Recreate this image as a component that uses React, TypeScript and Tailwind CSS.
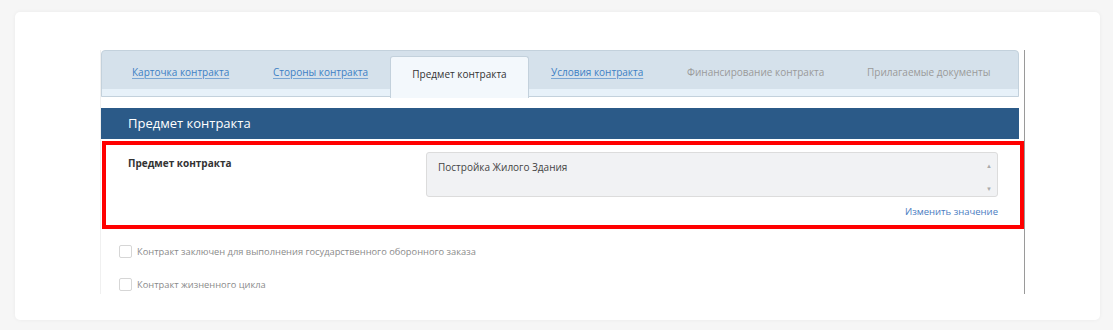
import React from 'react';

// Contract subject screen, shown as a framed screenshot on a card

type Tab = { label: string; width: string; pad: string; kind: 'link' | 'active' | 'muted' };

const tabs: Tab[] = [
  { label: 'Карточка контракта', width: 'w-[150px]', pad: 'pl-[30px]', kind: 'link' },
  { label: 'Стороны контракта', width: 'w-[138px]', pad: 'pl-[21px]', kind: 'link' },
  { label: 'Предмет контракта', width: 'w-[139px]', pad: 'justify-center', kind: 'active' },
  { label: 'Условия контракта', width: 'w-[138px]', pad: 'pl-[22px]', kind: 'link' },
  { label: 'Финансирование контракта', width: 'w-[180px]', pad: 'pl-[20px]', kind: 'muted' },
  { label: 'Прилагаемые документы', width: 'w-[170px]', pad: 'pl-[20px]', kind: 'muted' },
];

function TabItem({ tab }: { tab: Tab }) {
  if (tab.kind === 'active') {
    return (
      <div
        className={`${tab.width} ${tab.pad} mt-[5px] h-[42px] bg-[#f3f8fc] border border-b-0 border-[#c3d1dc] rounded-t-[3px] flex items-center pb-[7px] text-[#333] relative z-10`}
      >
        {tab.label}
      </div>
    );
  }
  return (
    <div className={`${tab.width} ${tab.pad} h-[38px] pt-[4px] flex items-center`}>
      {tab.kind === 'link' ? (
        <span className="text-[#3d7fc4] underline underline-offset-2 decoration-[#7aa6d4]">{tab.label}</span>
      ) : (
        <span className="text-[#9a9a9a]">{tab.label}</span>
      )}
    </div>
  );
}

function Checkbox({ label }: { label: string }) {
  return (
    <div className="flex items-center gap-[5px] h-[33px] pl-[18px]">
      <span className="w-[13px] h-[13px] border border-[#d6d6d6] rounded-[2px] bg-white" />
      <span className="text-[#8a8a8a] text-[9.3px] leading-[13px]">{label}</span>
    </div>
  );
}

export default function App() {
  return (
    <div className="w-[1113px] h-[330px] bg-[#f6f6f6] pt-[12px] pl-[15px] font-['Open_Sans',sans-serif] text-[10px]">
      <div className="w-[1085px] h-[308px] bg-white rounded-[5px] shadow-[0_0_4px_rgba(0,0,0,0.05)] pt-[38px] pl-[85px]">
        {/* embedded screenshot */}
        <div className="w-[925px] h-[244px] border-r border-[#9a9a9a] border-l border-l-[#f0f0f0] overflow-hidden">
          {/* tab bar */}
          <div className="w-[918px] h-[47px] bg-[#d5e1eb] border border-[#c3d1dc] rounded-t-[4px] flex flex-col">
            <div className="flex h-[38px]">
              {tabs.map((t) => (
                <TabItem key={t.label} tab={t} />
              ))}
            </div>
            <div className="h-[8px] bg-[#e7f1f9]" />
          </div>

          <div className="h-[11px]" />

          {/* section header */}
          <div className="w-[918px] h-[31px] bg-[#2b5a88] flex items-center pl-[27px] text-white text-[13px]">
            Предмет контракта
          </div>

          {/* highlighted field */}
          <div className="mt-[2px] ml-[1px] w-[922px] h-[88px] border-[4px] border-[#ff0000] flex">
            <div className="w-[320px] pl-[22px] pt-[11px] font-bold text-[#333]">Предмет контракта</div>
            <div className="flex flex-col items-end pt-[7px]">
              <div className="w-[572px] h-[45px] bg-[#f1f2f4] border border-[#dcdcdc] rounded-[3px] flex justify-between pl-[11px] pr-[5px] pt-[7px]">
                <span className="text-[#444]">Постройка Жилого Здания</span>
                <div className="flex flex-col justify-between h-[32px] text-[6px] text-[#aaa] leading-none pt-[3px]">
                  <span>▲</span>
                  <span>▼</span>
                </div>
              </div>
              <span className="mt-[8px] text-[#4a7cbf] text-[9.5px]">Изменить значение</span>
            </div>
          </div>

          {/* checkboxes */}
          <div className="pt-[6px]">
            <Checkbox label="Контракт заключен для выполнения государственного оборонного заказа" />
            <Checkbox label="Контракт жизненного цикла" />
          </div>
        </div>
      </div>
    </div>
  );
}
